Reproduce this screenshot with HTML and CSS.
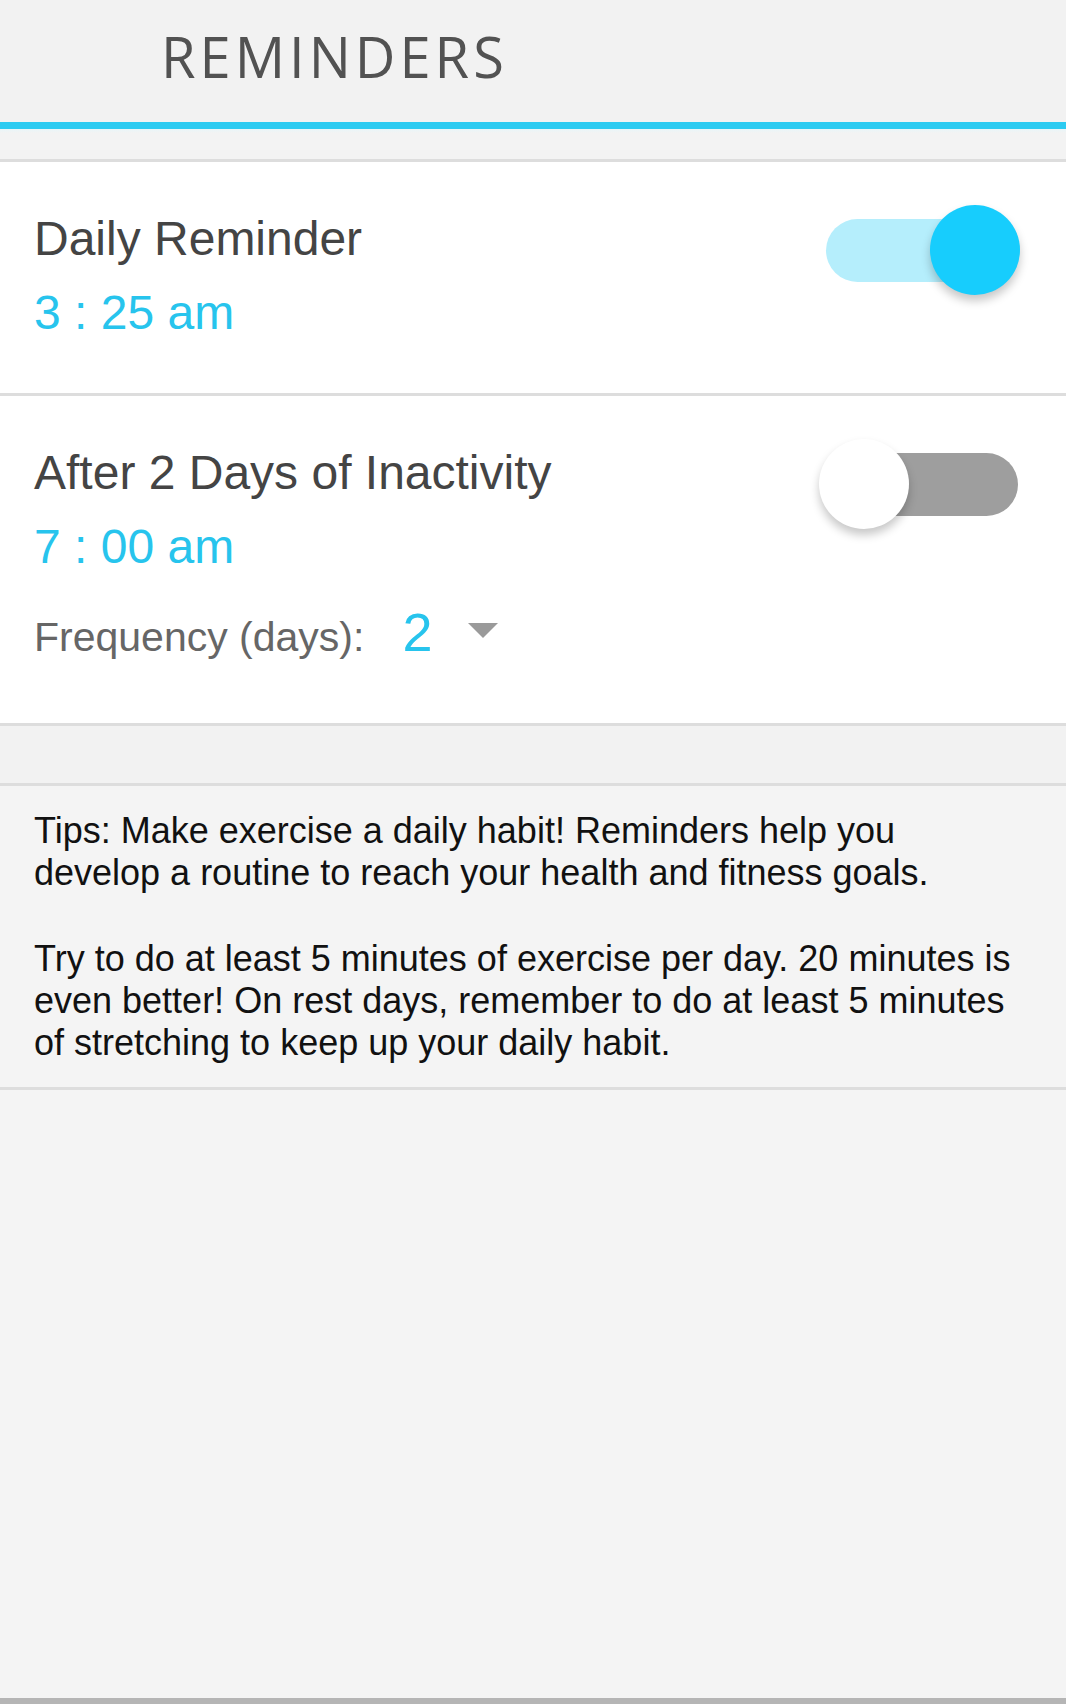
FILE: index.html
```html
<!DOCTYPE html>
<html lang="en">
<head>
<meta charset="utf-8">
<title>Reminders</title>
<link rel="stylesheet" href="styles.css">
</head>
<body>
<div class="page">
  <header class="topbar">
    <h1 class="topbar-title">REMINDERS</h1>
  </header>
  <div class="accent"></div>
  <div class="gap-top"></div>

  <section class="card">
    <div class="card-text">
      <div class="card-title">Daily Reminder</div>
      <div class="card-time">3 : 25 am</div>
    </div>
    <div class="toggle toggle-on">
      <div class="toggle-track"></div>
      <div class="toggle-thumb"></div>
    </div>
  </section>

  <section class="card">
    <div class="card-text">
      <div class="card-title">After 2 Days of Inactivity</div>
      <div class="card-time">7 : 00 am</div>
      <div class="freq">
        <span class="freq-label">Frequency (days):</span>
        <span class="freq-value">2</span>
        <span class="freq-caret"></span>
      </div>
    </div>
    <div class="toggle toggle-off">
      <div class="toggle-track"></div>
      <div class="toggle-thumb"></div>
    </div>
  </section>

  <div class="gap-mid"></div>

  <section class="tips">
    <p class="tips-text">Tips: Make exercise a daily habit! Reminders help you develop a routine to reach your health and fitness goals.</p>
    <p class="tips-text">Try to do at least 5 minutes of exercise per day. 20 minutes is even better! On rest days, remember to do at least 5 minutes of stretching to keep up your daily habit.</p>
  </section>

  <div class="filler"></div>
  <div class="bottom-bar"></div>
</div>
</body>
</html>
```

FILE: styles.css
```css
html, body {
  margin: 0;
  padding: 0;
}

body {
  background: #f4f4f4;
  font-family: "Liberation Sans", Arial, sans-serif;
}

.page {
  display: flex;
  flex-direction: column;
  min-height: 1704px;
}

.topbar {
  height: 122px;
  background: #f2f2f2;
  box-sizing: border-box;
  padding: 23px 0 0 161px;
}

.topbar-title {
  margin: 0;
  font-family: "Open Sans", sans-serif;
  font-weight: 400;
  font-size: 56px;
  line-height: 66px;
  letter-spacing: 4px;
  color: #525252;
}

.accent {
  height: 7px;
  background: #2ccbf1;
}

.gap-top {
  height: 30px;
  background: linear-gradient(#e9f5f8 0, #f3f3f3 4px, #f3f3f3 100%);
  border-bottom: 3px solid #dddddd;
}

.card {
  background: #ffffff;
  border-bottom: 3px solid #dddddd;
  display: flex;
  justify-content: space-between;
  align-items: flex-start;
  padding: 49px 46px 0 34px;
}

.card:first-of-type {
  padding-bottom: 52px;
}

.card + .card {
  padding-bottom: 61px;
}

.card-title {
  font-size: 48px;
  line-height: 56px;
  color: #444444;
}

.card-time {
  margin-top: 18px;
  font-size: 48px;
  line-height: 56px;
  color: #27c4ed;
}

.freq {
  display: flex;
  align-items: baseline;
  margin-top: 27px;
  height: 60px;
}

.freq-label {
  font-size: 41px;
  color: #666666;
}

.freq-value {
  margin-left: 38px;
  font-size: 54px;
  line-height: 60px;
  color: #27c4ed;
}

.freq-caret {
  margin-left: 36px;
  width: 0;
  height: 0;
  border-left: 15px solid transparent;
  border-right: 15px solid transparent;
  border-top: 15px solid #9a9a9a;
  align-self: center;
  position: relative;
  top: -2px;
}

.toggle {
  position: relative;
  width: 201px;
  height: 90px;
  margin-top: -6px;
  flex: none;
}

.toggle-track {
  position: absolute;
  left: 7px;
  top: 14px;
  width: 192px;
  height: 63px;
  border-radius: 32px;
}

.toggle-thumb {
  position: absolute;
  top: 0;
  width: 90px;
  height: 90px;
  border-radius: 50%;
  box-shadow: 0 6px 10px rgba(0, 0, 0, 0.22);
}

.toggle-on .toggle-track {
  background: #b5eefc;
}

.toggle-on .toggle-thumb {
  left: 111px;
  background: #17cdfd;
}

.toggle-off .toggle-track {
  background: #9e9e9e;
}

.toggle-off .toggle-thumb {
  left: 0;
  background: #ffffff;
}

.gap-mid {
  height: 57px;
  background: #f2f2f2;
  border-bottom: 3px solid #dddddd;
}

.tips {
  background: #f4f4f4;
  border-bottom: 3px solid #dddddd;
  padding: 24px 41px 23px 34px;
}

.tips-text {
  margin: 0;
  font-size: 36px;
  line-height: 42px;
  color: #111111;
}

.tips-text + .tips-text {
  margin-top: 44px;
}

.filler {
  flex: 1;
  background: #f4f4f4;
}

.bottom-bar {
  height: 6px;
  background: #b5b5b5;
}
```
